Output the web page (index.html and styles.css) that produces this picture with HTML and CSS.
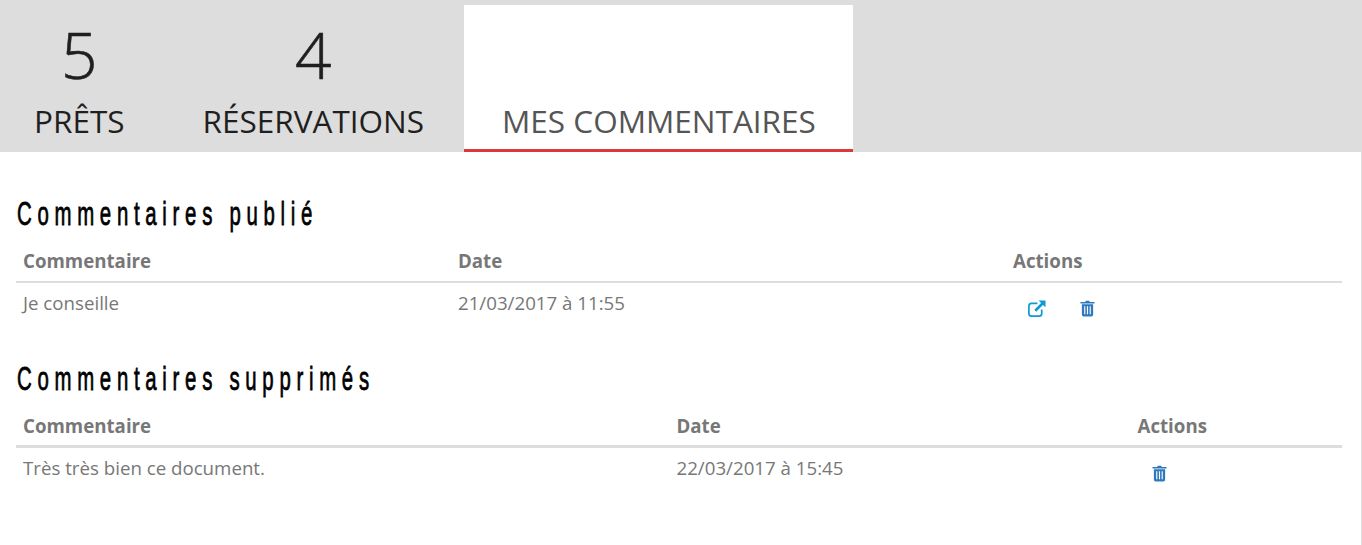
FILE: index.html
```html
<!DOCTYPE html>
<html lang="fr">
<head>
<meta charset="utf-8">
<title>Mes commentaires</title>
<link rel="stylesheet" href="styles.css">
</head>
<body>
<nav class="tabs">
  <a class="tab tab-first"><span class="count">5</span><span class="label">PRÊTS</span></a>
  <a class="tab"><span class="count">4</span><span class="label">RÉSERVATIONS</span></a>
  <a class="tab tab-active"><span class="count">&nbsp;</span><span class="label">MES COMMENTAIRES</span></a>
</nav>
<main class="content">
  <section class="block">
    <h2 class="title">Commentaires publié</h2>
    <table class="list list-published">
      <thead><tr><th class="c1">Commentaire</th><th class="c2">Date</th><th class="c3">Actions</th></tr></thead>
      <tbody><tr>
        <td>Je conseille</td>
        <td>21/03/2017 à 11:55</td>
        <td><div class="actions">
          <svg class="icon icon-open" viewBox="0 0 20 20" aria-hidden="true"><path d="M15.5 11v4.2a2.8 2.8 0 0 1-2.8 2.8H4.8A2.8 2.8 0 0 1 2 15.200V7.300a2.800 2.800 0 0 1 2.800-2.800H11" fill="none" stroke="currentColor" stroke-width="1.800"/><path d="M12.200 1.500H19.500V8.800L16.800 6.200 9.700 13.300 7.700 11.300 14.800 4.200Z" fill="currentColor"/></svg>
          <svg class="icon icon-trash" viewBox="0 0 16 18" aria-hidden="true"><path d="M5.500 2 6.300.8h3.400L10.500 2H15.500V3.600H.5V2ZM2 4.500H14V15.500A2 2 0 0 1 12 17.500H4A2 2 0 0 1 2 15.500ZM4.500 6.500V15H5.700V6.500ZM7.400 6.500V15H8.600V6.500ZM10.300 6.500V15H11.500V6.500Z" fill="currentColor" fill-rule="evenodd"/></svg>
        </div></td>
      </tr></tbody>
    </table>
  </section>
  <section class="block">
    <h2 class="title">Commentaires supprimés</h2>
    <table class="list list-deleted">
      <thead><tr><th class="c1">Commentaire</th><th class="c2">Date</th><th class="c3">Actions</th></tr></thead>
      <tbody><tr>
        <td>Très très bien ce document.</td>
        <td>22/03/2017 à 15:45</td>
        <td><div class="actions">
          <svg class="icon icon-trash" viewBox="0 0 16 18" aria-hidden="true"><path d="M5.500 2 6.300.8h3.400L10.500 2H15.500V3.600H.5V2ZM2 4.500H14V15.500A2 2 0 0 1 12 17.500H4A2 2 0 0 1 2 15.500ZM4.500 6.500V15H5.700V6.500ZM7.400 6.500V15H8.600V6.500ZM10.300 6.500V15H11.500V6.500Z" fill="currentColor" fill-rule="evenodd"/></svg>
        </div></td>
      </tr></tbody>
    </table>
  </section>
</main>
</body>
</html>
```
FILE: styles.css
```css
html, body { margin: 0; padding: 0; background: #fff; }
body { font-family: "Open Sans", sans-serif; color: #777; height: 545px; overflow: hidden; }
.tabs { display: flex; gap: 2px; height: 152px; background: #ddd; padding-top: 5px; box-sizing: border-box; }
.tab { display: flex; flex-direction: column; align-items: center; padding: 5px 38px 0; color: #1f1f1f; box-sizing: border-box; height: 147px; }
.tab-first { padding-left: 34px; }
.tab-active { background: #fff; color: #555; border-bottom: 3px solid #d9393b; padding-right: 37px; }
.count { font-size: 64px; font-weight: 300; line-height: 90px; -webkit-text-stroke: 0.600px #1f1f1f; }
.label { font-size: 31.500px; line-height: 42px; white-space: nowrap; }
.content { border-right: 1px solid #ddd; height: 393px; padding: 0 19px 0 16px; box-sizing: border-box; }
.block { padding-top: 41px; }
.block + .block { padding-top: 32px; }
.title { margin: 0 0 0 1px; font-family: "Liberation Sans", sans-serif; font-weight: 400; font-size: 34px; line-height: 40px; letter-spacing: 9.500px; color: #000; height: 40px; transform: scaleX(0.6); transform-origin: left center; white-space: nowrap; -webkit-text-stroke: 0.800px #000; }
.list { width: 1326px; border-collapse: collapse; table-layout: fixed; font-size: 18.700px; }
.list th { text-align: left; font-weight: 700; padding: 15px 7px 7px; line-height: 25px; color: #777; }
.list td { padding: 7px 7px 8px; line-height: 25px; vertical-align: top; }
.list-published th { border-bottom: 2px solid #ddd; padding-bottom: 8px; }
.list-deleted th { border-bottom: 3px solid #ddd; }
.list-published .c1 { width: 421px; }
.list-published .c2 { width: 541px; }
.list-deleted .c1 { width: 639.500px; }
.list-deleted .c2 { width: 447px; }
.actions { display: flex; align-items: center; gap: 34px; padding: 9px 0 0 14px; }
.list-deleted .actions { padding-top: 10px; }
.icon { display: block; flex: none; }
.icon-open { width: 19px; height: 19px; color: #0e9ad6; }
.icon-trash { width: 15px; height: 17px; color: #2f78bd; }
```
